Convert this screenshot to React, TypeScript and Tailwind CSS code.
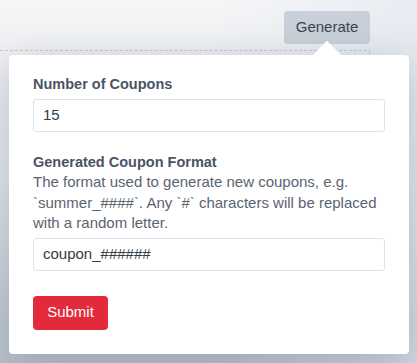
export default function App() {
  return (
    <div className="relative h-[363px] w-[417px] overflow-hidden bg-linear-to-b from-[#f6f6f7] via-[#e3e6ea] to-[#b6c0ca] font-['Liberation_Sans',Arial,sans-serif]">
      <div className="pointer-events-none absolute inset-0 bg-linear-to-r from-transparent via-transparent to-[#dfe7f0]/60" />
      <div className="relative flex h-[50px] items-start pl-[284px] pt-[11px]">
        <button className="h-[33px] w-[86px] rounded-[4px] bg-[#c9d0d9] text-[15px] text-[#3b4350]">
          Generate
        </button>
      </div>
      <div className="relative h-[5px] w-[370px] rounded-tr-[2px] border-t border-r border-dashed border-[#c6c9cd]" />
      <div className="relative ml-[9px] w-[400px] rounded-[4px] bg-white px-[24px] pt-[19px] pb-[24px] shadow-[0_8px_40px_rgba(90,105,125,0.35)]">
        <div className="absolute top-[-10px] left-[308px] h-[20px] w-[20px] rotate-45 bg-white" />
        <label className="relative block text-[14.5px] leading-[20px] font-bold text-[#4a5463]">
          Number of Coupons
        </label>
        <div className="mt-[5px] flex h-[33px] items-center rounded-[3px] border border-[#dfe3e9] px-[9px] text-[15px] text-[#343b45]">
          15
        </div>
        <label className="mt-[20px] block text-[14.5px] leading-[20px] font-bold text-[#4a5463]">
          Generated Coupon Format
        </label>
        <p className="text-[15px] leading-[20.5px] text-[#5a6471]">
          The format used to generate new coupons, e.g. `summer_####`. Any `#` characters will be replaced with a random letter.
        </p>
        <div className="mt-[4px] flex h-[33px] items-center rounded-[3px] border border-[#dfe3e9] px-[9px] text-[15px] text-[#343b45]">
          coupon_######
        </div>
        <button className="mt-[25px] h-[34px] w-[75px] rounded-[4px] bg-[#e32a3a] text-[15px] text-white">
          Submit
        </button>
      </div>
    </div>
  );
}
